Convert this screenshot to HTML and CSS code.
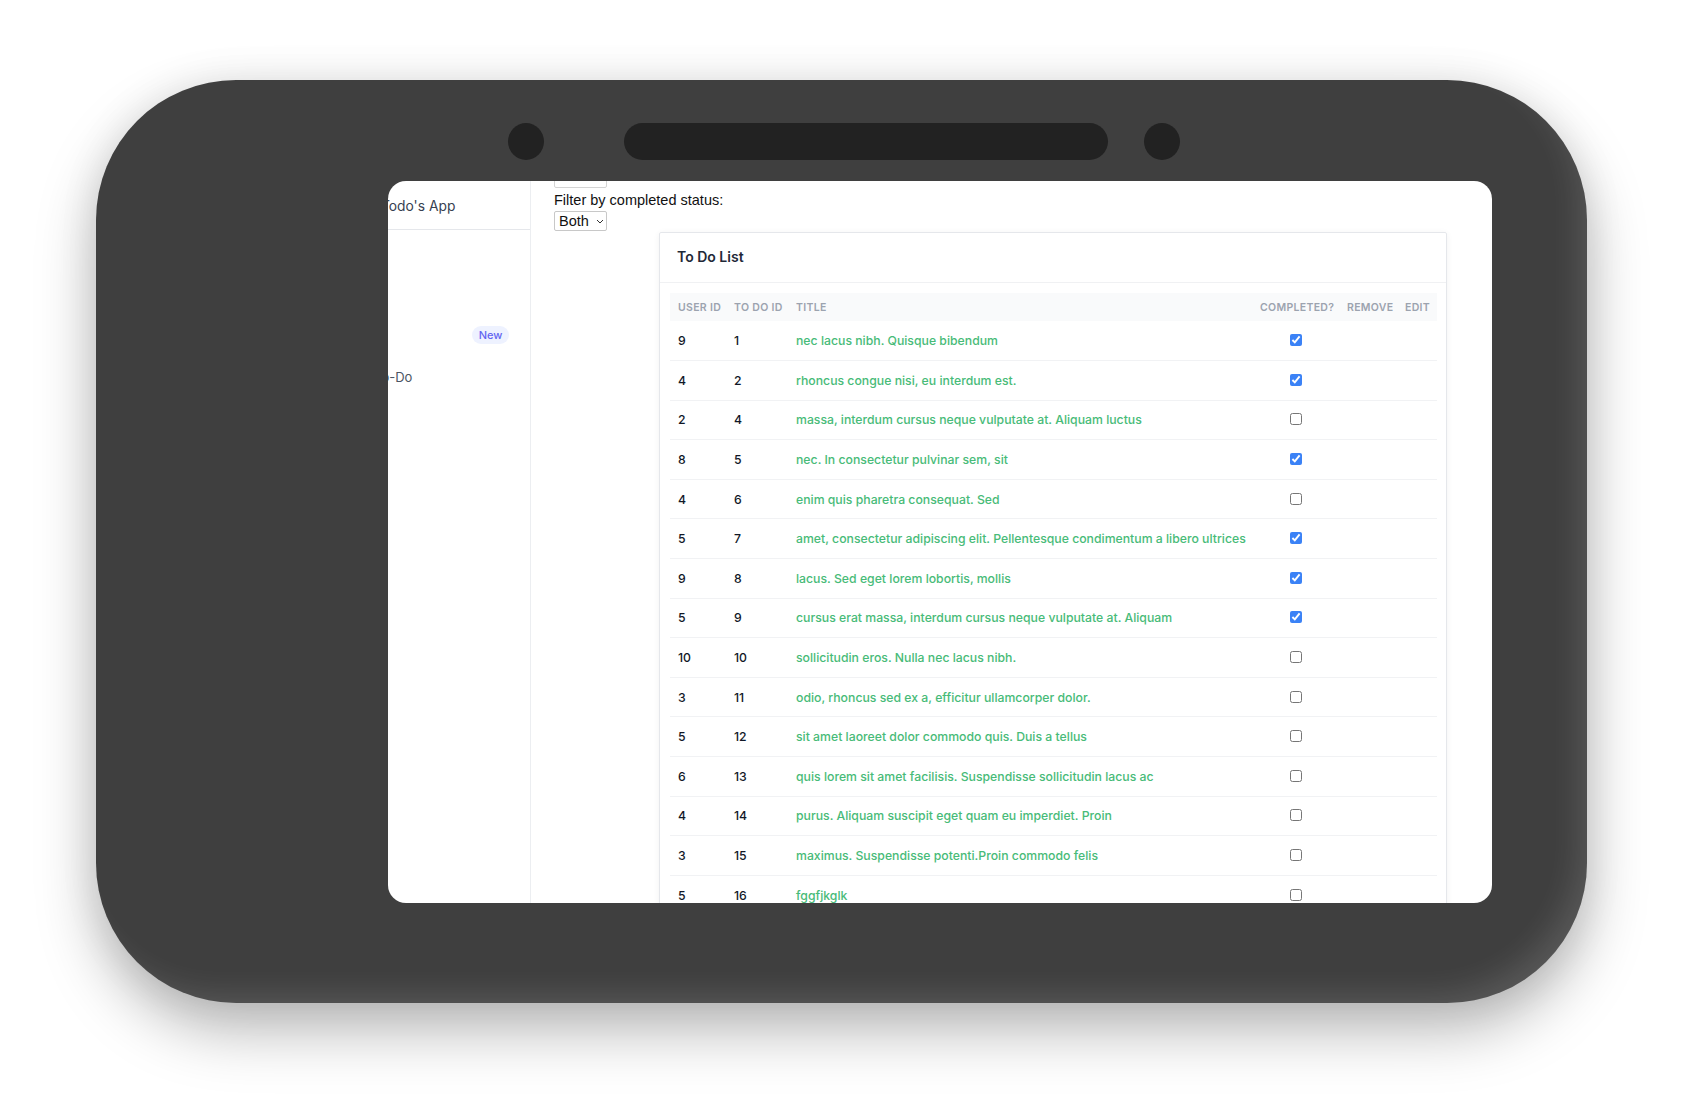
FILE: index.html
```html
<!DOCTYPE html>
<html lang="en">
<head>
	<meta name="viewport" content="width=device-width, initial-scale=1">
	<title>Todo's App</title>
	<link rel="stylesheet" href="styles.css">
</head>
<body>
<div class="stage">
	<div class="device">
		<div class="sensors">
			<span class="dot"></span>
			<span class="speaker"></span>
			<span class="dot"></span>
		</div>

		<div class="screen">
			<aside class="sidebar">
				<div class="brand">Todo's App</div>
				<nav class="nav">
					<a class="nav-item"><span>Dashboard</span><span class="badge">New</span></a>
					<a class="nav-item"><span>To-Do</span></a>
				</nav>
			</aside>

			<main class="main">
				<div class="top-box"></div>
				<label class="filter-label" for="status">Filter by completed status:</label>
				<div class="select">
					<span>Both</span>
					<svg width="8" height="5" viewBox="0 0 8 5"><path d="M1 1l3 3 3-3" fill="none" stroke="#333" stroke-width="1"/></svg>
				</div>

				<section class="card">
					<header class="card-head">To Do List</header>
					<div class="card-body">
						<table class="todo">
							<colgroup>
								<col class="c-user"><col class="c-id"><col class="c-title">
								<col class="c-done"><col class="c-remove"><col class="c-edit">
							</colgroup>
							<thead>
								<tr>
									<th>User ID</th>
									<th>To Do ID</th>
									<th>Title</th>
									<th class="center">Completed?</th>
									<th>Remove</th>
									<th>Edit</th>
								</tr>
							</thead>
							<tbody>
								<tr><td>9</td><td>1</td><td class="title">nec lacus nibh. Quisque bibendum</td><td class="center"><input type="checkbox" checked></td><td></td><td></td></tr>
								<tr><td>4</td><td>2</td><td class="title">rhoncus congue nisi, eu interdum est.</td><td class="center"><input type="checkbox" checked></td><td></td><td></td></tr>
								<tr><td>2</td><td>4</td><td class="title">massa, interdum cursus neque vulputate at. Aliquam luctus</td><td class="center"><input type="checkbox"></td><td></td><td></td></tr>
								<tr><td>8</td><td>5</td><td class="title">nec. In consectetur pulvinar sem, sit</td><td class="center"><input type="checkbox" checked></td><td></td><td></td></tr>
								<tr><td>4</td><td>6</td><td class="title">enim quis pharetra consequat. Sed</td><td class="center"><input type="checkbox"></td><td></td><td></td></tr>
								<tr><td>5</td><td>7</td><td class="title">amet, consectetur adipiscing elit. Pellentesque condimentum a libero ultrices</td><td class="center"><input type="checkbox" checked></td><td></td><td></td></tr>
								<tr><td>9</td><td>8</td><td class="title">lacus. Sed eget lorem lobortis, mollis</td><td class="center"><input type="checkbox" checked></td><td></td><td></td></tr>
								<tr><td>5</td><td>9</td><td class="title">cursus erat massa, interdum cursus neque vulputate at. Aliquam</td><td class="center"><input type="checkbox" checked></td><td></td><td></td></tr>
								<tr><td>10</td><td>10</td><td class="title">sollicitudin eros. Nulla nec lacus nibh.</td><td class="center"><input type="checkbox"></td><td></td><td></td></tr>
								<tr><td>3</td><td>11</td><td class="title">odio, rhoncus sed ex a, efficitur ullamcorper dolor.</td><td class="center"><input type="checkbox"></td><td></td><td></td></tr>
								<tr><td>5</td><td>12</td><td class="title">sit amet laoreet dolor commodo quis. Duis a tellus</td><td class="center"><input type="checkbox"></td><td></td><td></td></tr>
								<tr><td>6</td><td>13</td><td class="title">quis lorem sit amet facilisis. Suspendisse sollicitudin lacus ac</td><td class="center"><input type="checkbox"></td><td></td><td></td></tr>
								<tr><td>4</td><td>14</td><td class="title">purus. Aliquam suscipit eget quam eu imperdiet. Proin</td><td class="center"><input type="checkbox"></td><td></td><td></td></tr>
								<tr><td>3</td><td>15</td><td class="title">maximus. Suspendisse potenti.Proin commodo felis</td><td class="center"><input type="checkbox"></td><td></td><td></td></tr>
								<tr><td>5</td><td>16</td><td class="title">fggfjkglk</td><td class="center"><input type="checkbox"></td><td></td><td></td></tr>
							</tbody>
						</table>
					</div>
				</section>
			</main>
		</div>
	</div>
</div>
</body>
</html>
```

FILE: styles.css
```css
* {
	box-sizing: border-box;
	margin: 0;
	padding: 0;
}

html, body {
	width: 1684px;
	height: 1116px;
	overflow: hidden;
	background: #fff;
}

body {
	font-family: Inter, 'Noto Sans', sans-serif;
}

.stage {
	padding: 80px 0 0 96px;
}

/* device frame */
.device {
	width: 1491px;
	height: 923px;
	border-radius: 140px;
	background: #3f3f3f;
	padding-top: 43px;
	box-shadow:
		inset -18px -18px 30px -10px rgba(255,255,255,0.13),
		0 28px 60px rgba(0,0,0,0.28),
		0 0 40px rgba(0,0,0,0.08);
}

.sensors {
	display: flex;
	align-items: center;
	height: 37px;
	padding-left: 412px;
}

.dot {
	width: 36px;
	height: 37px;
	border-radius: 50%;
	background: #222;
}

.speaker {
	width: 484px;
	height: 37px;
	margin: 0 36px 0 80px;
	border-radius: 19px;
	background: #222;
}

.screen {
	display: flex;
	width: 1104px;
	height: 722px;
	margin: 21px 0 0 292px;
	background: #fff;
	border-radius: 18px;
	overflow: hidden;
}

/* sidebar */
.sidebar {
	flex: none;
	width: 176px;
	margin-left: -33px;
	border-right: 1px solid #eceef1;
}

.brand {
	height: 49px;
	padding: 17px 20px 0 26px;
	border-bottom: 1px solid #e5e7eb;
	font-size: 13.8px;
	color: #374151;
}

.nav {
	padding-top: 84px;
}

.nav-item {
	display: flex;
	align-items: center;
	justify-content: space-between;
	height: 42px;
	padding: 0 21px 0 19px;
	font-size: 13px;
	color: #4b5563;
}

.nav-item:first-child > span:first-child {
	visibility: hidden;
}

.badge {
	width: 37px;
	height: 18px;
	line-height: 18px;
	border-radius: 9px;
	background: #eef2ff;
	color: #6366f1;
	font-size: 11px;
	font-weight: 500;
	text-align: center;
}

/* main */
.main {
	flex: 1;
	padding-left: 23px;
	font-family: 'Liberation Sans', Arial, sans-serif;
}

.top-box {
	width: 53px;
	height: 20px;
	margin-top: -13px;
	border: 1px solid #d4d4d4;
	border-radius: 2px;
}

.filter-label {
	display: block;
	margin-top: 4px;
	font-size: 14.5px;
	line-height: 16px;
	color: #111;
}

.select {
	display: flex;
	align-items: center;
	gap: 7px;
	width: 53px;
	height: 20px;
	margin-top: 3px;
	padding-left: 4px;
	border: 1px solid #c8c8c8;
	border-radius: 2px;
	font-size: 14.5px;
	color: #111;
}

.card {
	width: 788px;
	margin: 1px 0 0 105px;
	border: 1px solid #e5e7eb;
	border-radius: 2px;
	background: #fff;
	box-shadow: 0 1px 6px rgba(0,0,0,0.06);
	font-family: Inter, 'Noto Sans', sans-serif;
}

.card-head {
	height: 50px;
	padding: 15px 0 0 17px;
	border-bottom: 1px solid #f0f1f3;
	font-size: 14px;
	font-weight: 600;
	color: #1f2937;
}

.card-body {
	padding: 10px 9px 0 10px;
}

.todo {
	width: 767px;
	border-collapse: collapse;
	table-layout: fixed;
}

.c-user { width: 56px; }
.c-id { width: 62px; }
.c-title { width: 464px; }
.c-done { width: 87px; }
.c-remove { width: 58px; }
.c-edit { width: 40px; }

.todo th {
	height: 28px;
	padding: 0 7px 0 8px;
	background: #f9fafb;
	text-align: left;
	font-size: 10.5px;
	font-weight: 600;
	letter-spacing: 0.03em;
	text-transform: uppercase;
	color: #9ca3af;
	white-space: nowrap;
}

.todo td {
	height: 39.6px;
	padding: 0 7px 0 8px;
	border-bottom: 1px solid #f1f2f4;
	font-size: 12.25px;
	font-weight: 500;
	color: #111827;
	white-space: nowrap;
}

.todo td.title {
	color: #48bb78;
}

.todo .center {
	text-align: center;
}

.todo input[type="checkbox"] {
	display: block;
	width: 12px;
	height: 12px;
	margin: -1px auto 0;
	accent-color: #3b82f6;
}
```
